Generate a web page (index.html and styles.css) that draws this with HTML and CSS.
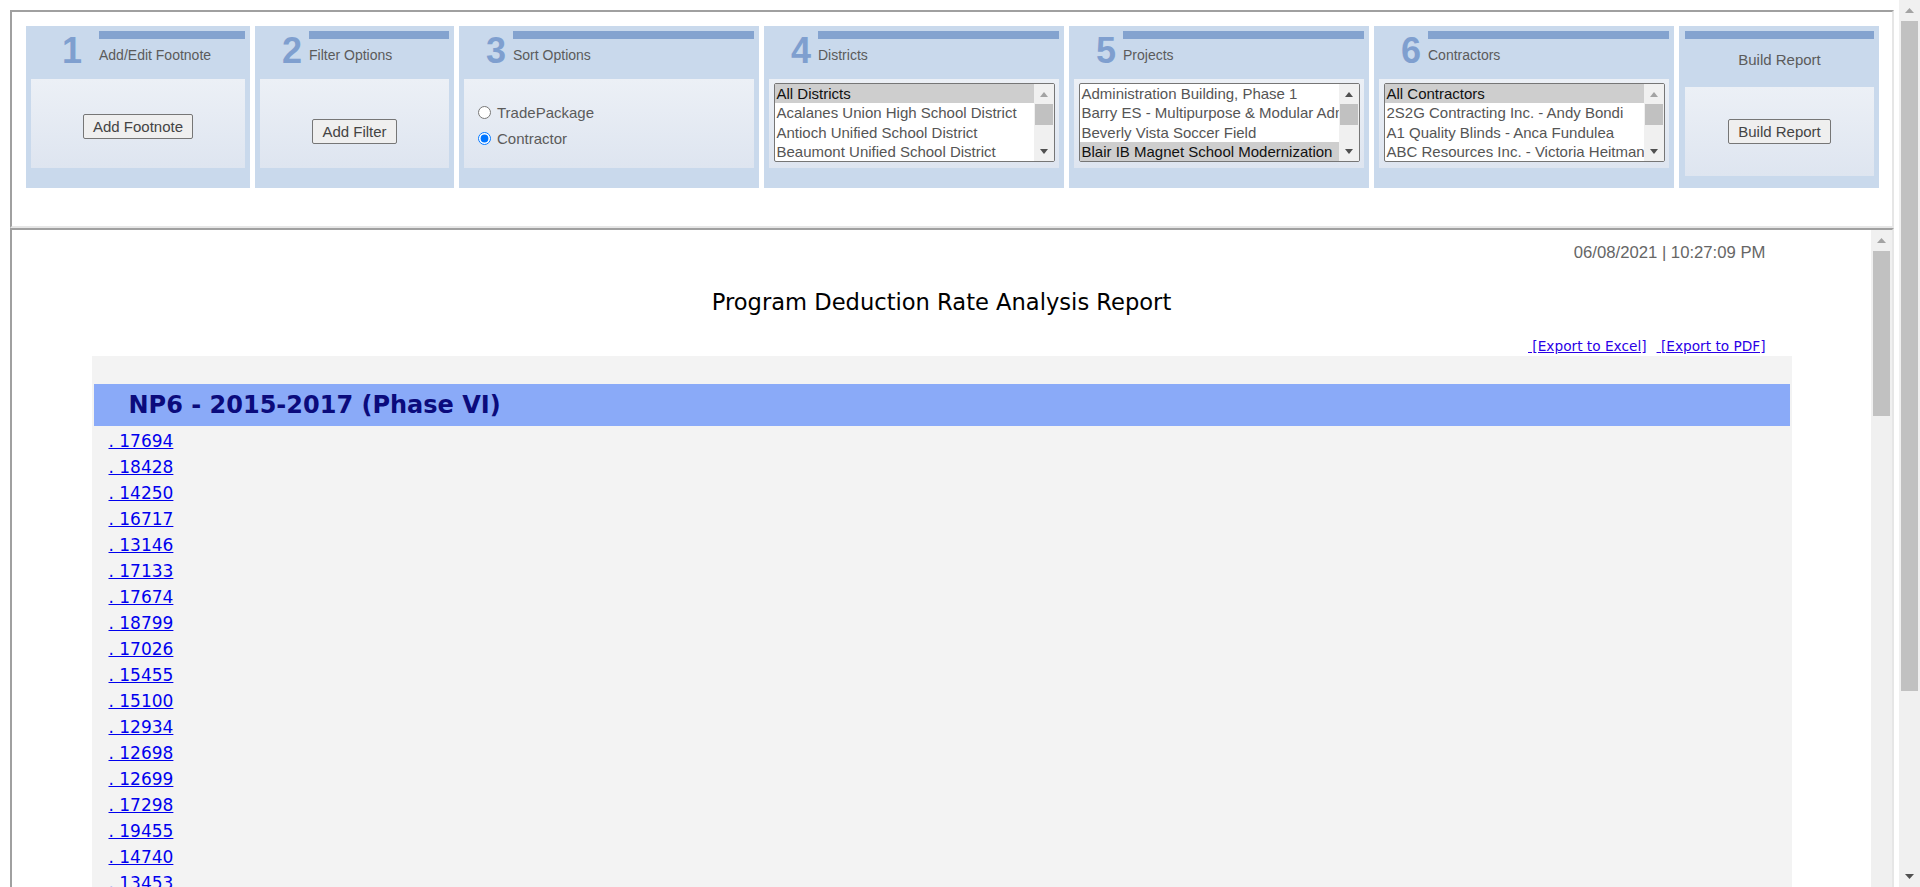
FILE: index.html
```html
<!DOCTYPE html>
<html>
<head>
<meta charset="utf-8">
<title>Program Deduction Rate Analysis Report</title>
<link rel="stylesheet" href="styles.css">
</head>
<body>
<div class="page">
  <div class="frame top">
    <div class="panels">
      <div class="panel p1">
        <div class="phead"><div class="pnum">1</div><div class="ptitle"><div class="stripe"></div><div class="ptext">Add/Edit Footnote</div></div></div>
        <div class="pbox btnbox"><button class="btn b1">Add Footnote</button></div>
      </div>
      <div class="panel p2">
        <div class="phead"><div class="pnum">2</div><div class="ptitle"><div class="stripe"></div><div class="ptext">Filter Options</div></div></div>
        <div class="pbox btnbox"><button class="btn b2">Add Filter</button></div>
      </div>
      <div class="panel p3">
        <div class="phead"><div class="pnum">3</div><div class="ptitle"><div class="stripe"></div><div class="ptext">Sort Options</div></div></div>
        <div class="pbox radiobox">
          <label class="rrow"><input type="radio" name="sort" class="radio">TradePackage</label>
          <label class="rrow"><input type="radio" name="sort" class="radio" checked>Contractor</label>
        </div>
      </div>
      <div class="panel p4">
        <div class="phead"><div class="pnum">4</div><div class="ptitle"><div class="stripe"></div><div class="ptext">Districts</div></div></div>
        <div class="pbox lbox">
          <div class="listbox">
            <div class="lbitems">
              <div class="lbitem sel">All Districts</div>
              <div class="lbitem">Acalanes Union High School District</div>
              <div class="lbitem">Antioch Unified School District</div>
              <div class="lbitem">Beaumont Unified School District</div>
            </div>
            <div class="lsb">
              <div class="lsbb"><svg width="8" height="5" viewBox="0 0 8 5"><path d="M0 5L4 0L8 5Z" fill="#a3a3a3"/></svg></div>
              <div class="lsbt"></div>
              <div class="lsbs"></div>
              <div class="lsbb"><svg width="8" height="5" viewBox="0 0 8 5"><path d="M0 0L4 5L8 0Z" fill="#505050"/></svg></div>
            </div>
          </div>
        </div>
      </div>
      <div class="panel p5">
        <div class="phead"><div class="pnum">5</div><div class="ptitle"><div class="stripe"></div><div class="ptext">Projects</div></div></div>
        <div class="pbox lbox">
          <div class="listbox">
            <div class="lbitems">
              <div class="lbitem">Administration Building, Phase 1</div>
              <div class="lbitem">Barry ES - Multipurpose &amp; Modular Administration</div>
              <div class="lbitem">Beverly Vista Soccer Field</div>
              <div class="lbitem sel">Blair IB Magnet School Modernization</div>
            </div>
            <div class="lsb">
              <div class="lsbb"><svg width="8" height="5" viewBox="0 0 8 5"><path d="M0 5L4 0L8 5Z" fill="#505050"/></svg></div>
              <div class="lsbt"></div>
              <div class="lsbs"></div>
              <div class="lsbb"><svg width="8" height="5" viewBox="0 0 8 5"><path d="M0 0L4 5L8 0Z" fill="#505050"/></svg></div>
            </div>
          </div>
        </div>
      </div>
      <div class="panel p6">
        <div class="phead"><div class="pnum">6</div><div class="ptitle"><div class="stripe"></div><div class="ptext">Contractors</div></div></div>
        <div class="pbox lbox">
          <div class="listbox">
            <div class="lbitems">
              <div class="lbitem sel">All Contractors</div>
              <div class="lbitem">2S2G Contracting Inc. - Andy Bondi</div>
              <div class="lbitem">A1 Quality Blinds - Anca Fundulea</div>
              <div class="lbitem">ABC Resources Inc. - Victoria Heitmann</div>
            </div>
            <div class="lsb">
              <div class="lsbb"><svg width="8" height="5" viewBox="0 0 8 5"><path d="M0 5L4 0L8 5Z" fill="#a3a3a3"/></svg></div>
              <div class="lsbt"></div>
              <div class="lsbs"></div>
              <div class="lsbb"><svg width="8" height="5" viewBox="0 0 8 5"><path d="M0 0L4 5L8 0Z" fill="#505050"/></svg></div>
            </div>
          </div>
        </div>
      </div>
      <div class="panel p7">
        <div class="stripe"></div>
        <div class="btitle">Build Report</div>
        <div class="pbox btnbox"><button class="btn">Build Report</button></div>
      </div>
    </div>
  </div>
  <div class="frame bottom">
    <div class="fcontent">
      <div class="report">
        <div class="date">06/08/2021 | 10:27:09 PM</div>
        <div class="rtitle">Program Deduction Rate Analysis Report</div>
        <div class="exports"><a href="#" class="exlink">&nbsp;[Export to Excel]</a><a href="#" class="exlink second">&nbsp;[Export to PDF]</a></div>
        <div class="rbody">
          <div class="group">NP6 - 2015-2017 (Phase VI)</div>
          <div class="links">
            <a href="#" class="plink">. 17694</a>
            <a href="#" class="plink">. 18428</a>
            <a href="#" class="plink">. 14250</a>
            <a href="#" class="plink">. 16717</a>
            <a href="#" class="plink">. 13146</a>
            <a href="#" class="plink">. 17133</a>
            <a href="#" class="plink">. 17674</a>
            <a href="#" class="plink">. 18799</a>
            <a href="#" class="plink">. 17026</a>
            <a href="#" class="plink">. 15455</a>
            <a href="#" class="plink">. 15100</a>
            <a href="#" class="plink">. 12934</a>
            <a href="#" class="plink">. 12698</a>
            <a href="#" class="plink">. 12699</a>
            <a href="#" class="plink">. 17298</a>
            <a href="#" class="plink">. 19455</a>
            <a href="#" class="plink">. 14740</a>
            <a href="#" class="plink">. 13453</a>
          </div>
        </div>
      </div>
    </div>
    <div class="vsb inner">
      <div class="vsbb"><svg width="9" height="5" viewBox="0 0 9 5"><path d="M0 5L4.5 0L9 5Z" fill="#a3a3a3"/></svg></div>
      <div class="vsbt"></div>
      <div class="vsbs"></div>
    </div>
  </div>
</div>
<div class="vsb outer">
  <div class="vsbb"><svg width="9" height="5" viewBox="0 0 9 5"><path d="M0 5L4.5 0L9 5Z" fill="#a3a3a3"/></svg></div>
  <div class="vsbt"></div>
  <div class="vsbs"></div>
  <div class="vsbb"><svg width="9" height="5" viewBox="0 0 9 5"><path d="M0 0L4.5 5L9 0Z" fill="#505050"/></svg></div>
</div>
</body>
</html>
```
FILE: styles.css
```css
html, body {
  margin: 0;
  padding: 0;
}
body {
  height: 887px;
  overflow: hidden;
  display: flex;
  background: #ffffff;
  font-family: "Liberation Sans", Arial, sans-serif;
}
.page {
  flex: 1;
  min-width: 0;
  display: flex;
  flex-direction: column;
  padding: 10px 5px 0 10px;
}
.frame {
  border: 2px solid;
  border-color: #a0a0a0 #e6e6e6 #e6e6e6 #a0a0a0;
}
.frame.top {
  flex: none;
  height: 218px;
  box-sizing: border-box;
  padding: 14px;
}
.frame.bottom {
  flex: 1;
  min-height: 0;
  display: flex;
  border-bottom: none;
  overflow: hidden;
}

/* panels */
.panels {
  display: flex;
  gap: 5px;
}
.panel {
  flex: none;
  box-sizing: border-box;
  height: 162px;
  padding: 5px 5px 20px;
  background: #c9d9ec;
  display: flex;
  flex-direction: column;
}
.p1 { width: 224px; }
.p2 { width: 199px; }
.p3, .p4, .p5, .p6 { width: 300px; }
.p7 { width: 200px; padding: 5px 5px 12px 6px; }
.phead {
  display: flex;
  height: 48px;
  flex: none;
}
.pnum {
  flex: none;
  width: 49px;
  box-sizing: border-box;
  padding-left: 22px;
  font-weight: bold;
  font-size: 36px;
  line-height: 40px;
  color: #7f9fcf;
}
.p1 .pnum { width: 68px; padding-left: 31px; }
.ptitle { flex: 1; }
.stripe {
  height: 8px;
  background: #84a3cf;
}
.ptext {
  margin-top: 8px;
  font-size: 14px;
  line-height: 16px;
  color: #5b5b5b;
}
.btitle {
  margin-top: 13px;
  text-align: center;
  font-size: 15px;
  line-height: 16px;
  color: #5b5b5b;
}
.pbox {
  flex: none;
  height: 89px;
  background: linear-gradient(#ecf0f6, #dee5f0);
  display: flex;
}
.p7 .pbox { margin-top: 19px; }
.btnbox {
  justify-content: center;
  align-items: center;
}
.btn {
  font-family: "Liberation Sans", Arial, sans-serif;
  font-size: 15px;
  line-height: 17px;
  color: #444;
  padding: 3px 9px;
  border: 1px solid #767676;
  border-radius: 2px;
  background: #efefef;
}
.b1 { margin-top: 6px; }
.b2 { margin-top: 16px; }

/* radios */
.radiobox {
  flex-direction: column;
  padding: 20px 0 0 14px;
  box-sizing: border-box;
}
.rrow {
  display: flex;
  align-items: center;
  height: 26px;
  font-size: 15px;
  color: #5b5b5b;
}
.radio {
  width: 13px;
  height: 13px;
  margin: 0 6px 0 0;
}

/* list boxes */
.lbox {
  justify-content: center;
  align-items: flex-start;
  padding-top: 4px;
  box-sizing: border-box;
}
.listbox {
  width: 281px;
  height: 79px;
  box-sizing: border-box;
  border: 1px solid #767676;
  border-radius: 2px;
  background: #fff;
  display: flex;
  overflow: hidden;
}
.lbitems {
  flex: 1;
  min-width: 0;
  overflow: hidden;
}
.lbitem {
  height: 19.25px;
  line-height: 19px;
  padding: 0 2px;
  font-size: 15px;
  color: #555;
  white-space: nowrap;
  overflow: hidden;
}
.lbitem.sel {
  background: #cecece;
  color: #111;
}
.lsb {
  flex: none;
  width: 20px;
  background: #f0f0f0;
  display: flex;
  flex-direction: column;
}
.lsbb {
  height: 20px;
  display: flex;
  align-items: center;
  justify-content: center;
}
.lsbt {
  height: 21px;
  margin: 0 1px;
  background: #c1c1c1;
}
.lsbs { flex: 1; }

/* report frame */
.fcontent {
  flex: 1;
  min-width: 0;
}
.report {
  width: 1700px;
  margin: 0 auto;
}
.date {
  margin-top: 13px;
  padding-right: 26px;
  text-align: right;
  font-size: 16.7px;
  line-height: 20px;
  color: #666;
}
.rtitle {
  margin-top: 26px;
  text-align: center;
  font-family: "DejaVu Sans", Verdana, sans-serif;
  font-size: 22.6px;
  line-height: 26px;
  color: #000;
}
.exports {
  margin-top: 23px;
  padding-right: 26px;
  text-align: right;
  font-family: "DejaVu Sans", Verdana, sans-serif;
  font-size: 13.7px;
  line-height: 16px;
}
.exlink { color: #2a00e6; }
.exlink.second { margin-left: 10px; }
.rbody {
  margin-top: 2px;
  background: #f3f3f3;
  padding-top: 28px;
  min-height: 600px;
}
.group {
  margin: 0 2px;
  height: 42px;
  padding-left: 35px;
  background: #8aaaf8;
  font-family: "DejaVu Sans", Verdana, sans-serif;
  font-weight: bold;
  font-size: 24px;
  line-height: 42px;
  color: #0b0b7c;
}
.links {
  margin-top: 2px;
  padding-left: 17px;
  display: flex;
  flex-direction: column;
  align-items: flex-start;
}
.plink {
  font-family: "DejaVu Sans", Verdana, sans-serif;
  font-size: 17px;
  line-height: 26px;
  color: #0000ee;
}

/* scrollbars */
.vsb {
  flex: none;
  width: 21px;
  background: #f0f0f0;
  display: flex;
  flex-direction: column;
}
.vsbb {
  flex: none;
  height: 21px;
  display: flex;
  align-items: center;
  justify-content: center;
}
.vsbt {
  flex: none;
  margin: 0 2px;
  background: #c1c1c1;
}
.outer .vsbt { height: 670px; }
.inner .vsbt { height: 165px; }
.vsbs { flex: 1; }
```
